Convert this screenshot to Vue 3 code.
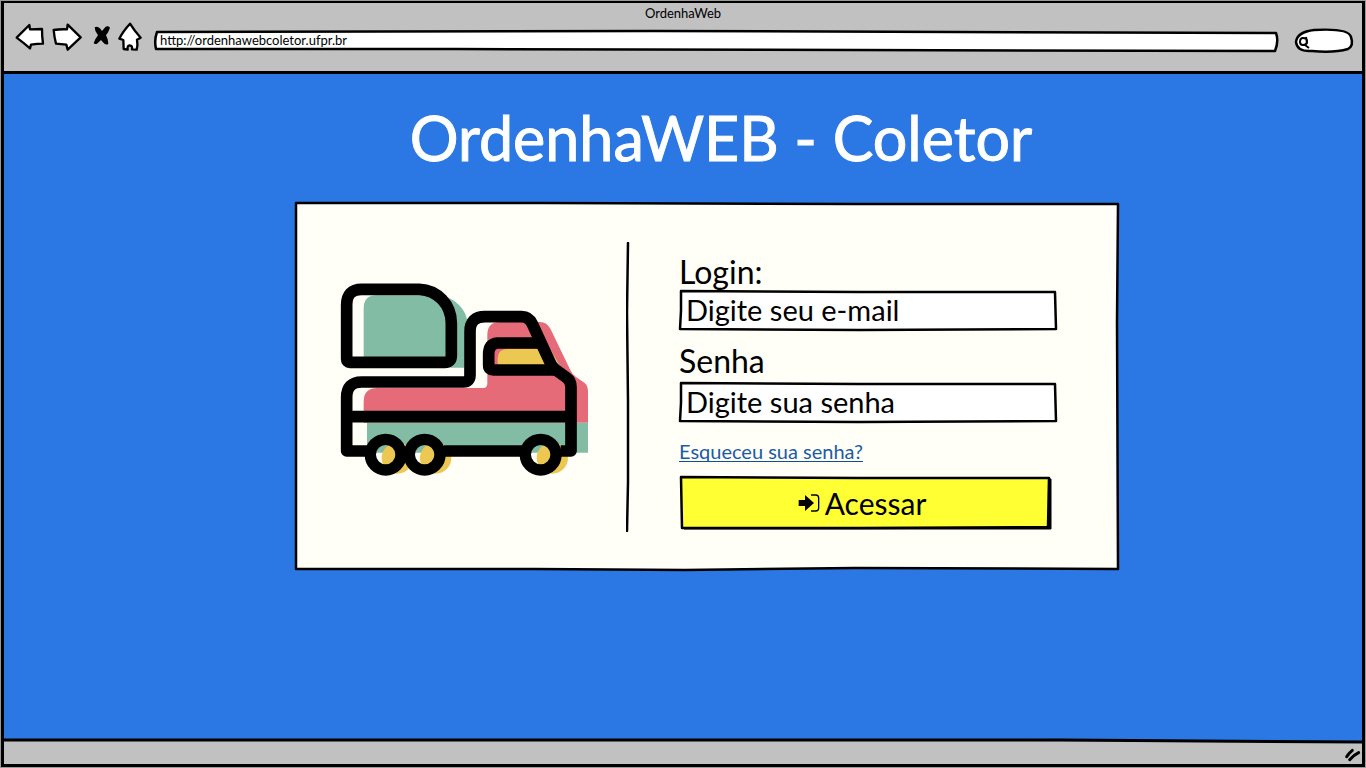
<script setup>
import { ref } from 'vue'

const address = ref('http://ordenhawebcoletor.ufpr.br')
const search = ref('')
const email = ref('')
const password = ref('')
</script>

<template>
  <div class="window">
    <header class="chrome">
      <div class="window-title">OrdenhaWeb</div>
      <div class="toolbar">
        <nav class="nav" aria-label="Navegador">
          <button type="button" class="tool" aria-label="Voltar">
            <svg class="glyph" width="30" height="30" viewBox="45 66 90 90">
              <path d="M50 113 L88 75 L90 88 Q110 87 126 87 Q126 110 129 131 Q112 131 93 134 L90 145 Q70 128 50 113Z" />
            </svg>
          </button>
          <button type="button" class="tool forward" aria-label="Avançar">
            <svg class="glyph" width="30" height="30" viewBox="156 66 90 90">
              <path d="M161 90 Q180 87 201 88 L203 74 L242 112 L203 149 L199 134 Q183 133 168 131 Q163 112 161 90Z" />
            </svg>
          </button>
          <button type="button" class="tool stop" aria-label="Parar">
            <svg width="19" height="30" viewBox="276 66 57 90">
              <path d="M284 82 Q292 77 301 86 L306 93 L317 80 Q325 77 330 83 Q325 98 318 106 Q325 118 325 131 Q318 138 309 127 L303 120 L291 131 Q285 134 281 130 Q284 118 294 106 Q284 95 284 82Z" fill="#000" />
            </svg>
          </button>
          <button type="button" class="tool home" aria-label="Início">
            <svg class="glyph" width="26" height="30" viewBox="351 66 78 90">
              <path d="M390 71 Q402 91 422 113 L411 119 Q414 134 410 149 L396 148 Q398 136 389 136 Q381 137 383 149 L371 147 L370 120 L358 116 Q368 95 390 71Z" />
            </svg>
          </button>
        </nav>
        <div class="sketch address">
          <svg class="frame" viewBox="0 0 1125 22" preserveAspectRatio="none" aria-hidden="true">
            <path d="M3 2 L500 1 L1122 3 Q1125 11 1121 21 L700 20 L300 19 L2 19 Q0 10 3 2Z" />
          </svg>
          <input v-model="address" type="text" aria-label="Endereço" />
        </div>
        <div class="sketch search">
          <svg class="frame" viewBox="0 0 60 26" preserveAspectRatio="none" aria-hidden="true">
            <path d="M2 14 Q3 4 20 2 Q55 0 57 9 Q60 18 54 21 Q40 25 18 23 Q3 24 2 14Z" />
            <path class="lens" d="M6 14 Q6 10 9 10 Q13 10 13 13 Q13 17 9 17 Q6 17 6 14 M12 9 L13 15 L11 17 L15 20" />
          </svg>
          <input v-model="search" type="text" aria-label="Pesquisar" />
        </div>
      </div>
    </header>

    <main class="page">
      <h1>OrdenhaWEB - Coletor</h1>
      <section class="sketch card">
        <svg class="frame card-frame" viewBox="0 0 824 368" preserveAspectRatio="none" aria-hidden="true">
          <path d="M1 1 L250 1 L560 2 L823 2 L822 120 L823 367 L560 366 L390 368 L240 367 L1 367 L1 180Z" />
        </svg>
        <div class="card-body">
          <div class="picture">
            <svg width="250" height="196" viewBox="60 66 750 588" role="img" aria-label="Caminhão coletor">
              <path fill="#82bca5" d="M131 323 V145 Q131 106 170 106 H370 Q430 130 441 178 L433 215 V323Z" />
              <path fill="#e56b79" d="M131 488 V425 Q131 384 172 384 H490 Q502 384 502 370 V225 Q502 186 540 186 H660 Q681 186 692 208 L752 332 Q757 343 767 350 L793 368 Q804 376 804 395 V488Z" />
              <path fill="#82bca5" d="M141 488 H804 V578 H141Z" />
              <path fill="#ecc852" d="M533 320 V295 Q533 267 565 267 H690 L724 325 L700 330 H533Z" />
              <g fill="#ecc852">
                <circle cx="232" cy="594" r="47" />
                <circle cx="347" cy="594" r="47" />
                <circle cx="697" cy="594" r="47" />
              </g>
              <g fill="none" stroke="#000" stroke-width="35" stroke-linejoin="round">
                <path d="M80 297 V135 Q80 88 125 88 H298 C352 90 394 134 394 190 V287 Q394 307 374 307 H90 Q80 307 80 297Z" />
                <path d="M142 573 H80 V412 Q80 366 125 366 H430 Q450 366 450 345 V215 Q450 170 495 170 H605 Q627 170 637 192 L692 311 Q697 322 708 330 L740 353 Q753 362 753 382 V573 H722" />
                <path d="M660 249 H532 Q506 252 506 283 V316 Q506 330 521 330 H705" />
                <path d="M80 470 H753 M372 573 H607" />
                <circle cx="197" cy="584" r="46" stroke-width="34" />
                <circle cx="314" cy="584" r="46" stroke-width="34" />
                <circle cx="662" cy="584" r="46" stroke-width="34" />
              </g>
            </svg>
          </div>
          <svg class="divider" viewBox="0 0 4 290" preserveAspectRatio="none" aria-hidden="true">
            <path d="M2 1 L1 70 L2 160 L2 240 L1 289" />
          </svg>
          <form class="form" @submit.prevent>
            <label for="email">Login:</label>
            <div class="sketch field">
              <svg class="frame" viewBox="0 0 378 40" preserveAspectRatio="none" aria-hidden="true">
                <path d="M2 1 L180 2 L376 2 L377 38 L180 39 L1 38 L2 20Z" />
              </svg>
              <input id="email" v-model="email" type="email" placeholder="Digite seu e-mail" />
            </div>
            <label for="password" class="second">Senha</label>
            <div class="sketch field">
              <svg class="frame" viewBox="0 0 378 40" preserveAspectRatio="none" aria-hidden="true">
                <path d="M2 1 L180 2 L376 2 L377 38 L180 39 L1 38 L2 20Z" />
              </svg>
              <input id="password" v-model="password" type="password" placeholder="Digite sua senha" />
            </div>
            <a href="#">Esqueceu sua senha?</a>
            <button type="submit" class="sketch submit">
              <svg class="frame" viewBox="0 0 372 54" preserveAspectRatio="none" aria-hidden="true">
                <path class="shadow" d="M4 51 L4 53 L371 53 L371 3 L368 3 L368 51Z" />
                <path class="face" d="M1 1 L180 2 L369 2 L368 51 L180 52 L2 52Z" />
              </svg>
              <span class="submit-label">
                <svg width="22" height="18" viewBox="0 0 66 54" aria-hidden="true">
                  <path d="M2 18 H21 V3 L48 27 L21 51 V36 H2Z" />
                  <path d="M39 3 H53 Q62 3 62 12 V42 Q62 51 53 51 H39" fill="none" stroke="#000" stroke-width="4" />
                </svg>
                Acessar
              </span>
            </button>
          </form>
        </div>
      </section>
    </main>

    <footer class="status">
      <svg class="edge" viewBox="0 0 1360 4" preserveAspectRatio="none" aria-hidden="true">
        <path class="fill" d="M0 1 L700 1 L1360 3 V4 H0Z" />
        <path class="line" d="M0 1 L700 1 L1060 1 L1360 3" />
      </svg>
      <svg class="grip" width="18" height="14" viewBox="0 0 54 42" aria-hidden="true">
        <path d="M8 26 Q14 16 25 7 M17 35 Q28 22 44 14" />
      </svg>
    </footer>
  </div>
</template>

<style>
body {
  background: #9a9a9a;
}
</style>

<style scoped>
* {
  box-sizing: border-box;
}
.window {
  display: flex;
  flex-direction: column;
  min-height: calc(100vh - 2px);
  margin: 1px;
  border: 3px solid #000;
  border-top-width: 2px;
  background: #2b78e4;
  color: #000;
  font-family: Lato, "Open Sans", sans-serif;
}
button,
input {
  padding: 0;
  border: 0;
  background: none;
  color: inherit;
  font: inherit;
}
button {
  cursor: pointer;
}
svg {
  display: block;
}
.chrome {
  padding: 1px 8px 19px;
  border-bottom: 3px solid #000;
  background: #c1c1c1;
}
.window-title {
  font-size: 13px;
  line-height: 18px;
  text-align: center;
}
.toolbar {
  display: flex;
  align-items: center;
  height: 30px;
}
.nav {
  display: flex;
  margin: 0 11px 0 3px;
}
.forward {
  margin-left: 7px;
}
.stop {
  margin-left: 10px;
}
.home {
  margin-left: 6px;
}
.glyph path {
  fill: #fff;
  stroke: #000;
  stroke-width: 7;
  stroke-linejoin: round;
}
.sketch {
  display: grid;
}
.sketch > * {
  grid-area: 1 / 1;
  min-width: 0;
}
.frame {
  width: 100%;
  height: 100%;
  overflow: visible;
}
.frame path {
  fill: #fff;
  stroke: #000;
  stroke-width: 2.5;
  stroke-linejoin: round;
  vector-effect: non-scaling-stroke;
}
.address {
  flex: 1;
  height: 22px;
  margin-top: 8px;
}
.address input {
  padding: 0 8px 2px 6px;
  font-size: 13px;
}
.search {
  width: 60px;
  height: 26px;
  margin-top: 8px;
  margin-left: 15px;
}
.search input {
  padding: 0 8px 0 18px;
  font-size: 13px;
}
.frame .lens {
  fill: none;
  stroke-width: 2;
}
.page {
  flex: 1;
  display: flex;
  flex-direction: column;
  align-items: center;
  padding: 28px 0 28px 48px;
}
h1 {
  margin: 0 0 28px 28px;
  color: #fff;
  font-size: 61px;
  font-weight: 400;
  line-height: 72px;
  -webkit-text-stroke: 1px #fff;
}
.card {
  width: 824px;
  max-width: 100%;
}
.frame.card-frame path {
  fill: #fffff8;
}
.card-body {
  display: grid;
  grid-template-columns: 250px 4px minmax(0, 378px);
  column-gap: 0;
  justify-content: space-between;
  padding: 40px 62px 38px 45px;
}
.picture {
  margin-right: -14px;
  padding-top: 40px;
}
.divider {
  width: 4px;
  height: 290px;
  margin-left: -7px;
  fill: none;
  stroke: #000;
  stroke-width: 2.5;
  stroke-linecap: round;
}
.form {
  display: flex;
  flex-direction: column;
  padding-top: 12px;
}
label {
  font-size: 32px;
  line-height: 36px;
}
.second {
  margin: 12px 0 3px;
}
.field {
  height: 41px;
}
.field input {
  padding: 0 8px 3px 7px;
  font-size: 29px;
}
.field input::placeholder {
  color: #000;
  opacity: 1;
}
a {
  align-self: flex-start;
  margin-top: 18px;
  border-bottom: 1px solid #114f94;
  color: #1b5ba6;
  font-size: 20px;
  line-height: 20px;
  text-decoration: none;
}
.submit {
  width: 372px;
  max-width: 100%;
  height: 54px;
  margin-top: 14px;
  margin-left: 1px;
}
.frame .face {
  fill: #ffff33;
}
.frame .shadow {
  fill: #000;
  stroke-width: 1;
}
.submit-label {
  display: flex;
  align-items: center;
  justify-content: center;
  gap: 5px;
  padding-right: 8px;
  font-size: 30px;
}
.status {
  display: flex;
  flex-direction: column;
  background: #c1c1c1;
}
.edge {
  width: 100%;
  height: 4px;
  overflow: visible;
  background: #2b78e4;
}
.edge .fill {
  fill: #c1c1c1;
}
.edge .line {
  fill: none;
  stroke: #000;
  stroke-width: 3;
  vector-effect: non-scaling-stroke;
}
.grip {
  align-self: flex-end;
  margin: 5px 0 2px 0;
  fill: none;
  stroke: #000;
  stroke-width: 9;
  stroke-linecap: round;
}
</style>
